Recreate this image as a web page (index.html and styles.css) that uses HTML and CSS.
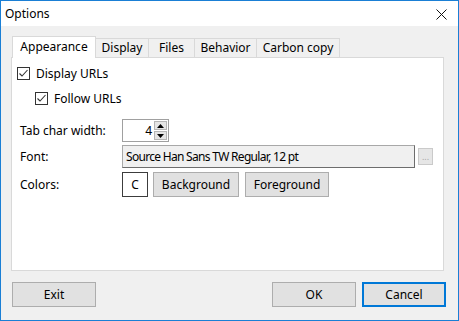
FILE: index.html
```html
<!DOCTYPE html>
<html>
<head>
<meta charset="utf-8">
<link rel="stylesheet" href="styles.css">
</head>
<body>
<div class="window">
  <div class="titlebar">
    <span class="title">Options</span>
    <svg class="close" width="11" height="11" viewBox="0 0 11 11"><path d="M0.5 0.5 L10.5 10.5 M10.5 0.5 L0.5 10.5" stroke="#111" stroke-width="1" fill="none"/></svg>
  </div>
  <div class="client">
    <div class="tabs">
      <div class="tab selected">Appearance</div>
      <div class="tab t-display">Display</div>
      <div class="tab t-files">Files</div>
      <div class="tab t-behavior">Behavior</div>
      <div class="tab t-carbon">Carbon copy</div>
    </div>
    <div class="panel">
      <label class="check row1">
        <span class="box"><svg width="11" height="11" viewBox="0 0 11 11"><path d="M1.5 5.5 L4 8 L9.5 2" stroke="#333" stroke-width="1.1" fill="none"/></svg></span>
        <span>Display URLs</span>
      </label>
      <label class="check row2">
        <span class="box"><svg width="11" height="11" viewBox="0 0 11 11"><path d="M1.5 5.5 L4 8 L9.5 2" stroke="#333" stroke-width="1.1" fill="none"/></svg></span>
        <span>Follow URLs</span>
      </label>
      <div class="form">
        <div class="label l-tab">Tab char width:</div>
        <div class="field f-tab">
          <div class="spinner">
            <span class="spin-value">4</span>
            <div class="spin-buttons">
              <span class="spin-btn"><svg width="7" height="4" viewBox="0 0 7 4"><path d="M0 4 L3.5 0 L7 4 Z" fill="#000"/></svg></span>
              <span class="spin-btn"><svg width="7" height="4" viewBox="0 0 7 4"><path d="M0 0 L3.5 4 L7 0 Z" fill="#000"/></svg></span>
            </div>
          </div>
        </div>
        <div class="label l-font">Font:</div>
        <div class="field f-font">
          <div class="fontbox">Source Han Sans TW Regular, 12 pt</div>
          <div class="ellipsis">...</div>
        </div>
        <div class="label l-colors">Colors:</div>
        <div class="field f-colors">
          <div class="cbox">C</div>
          <div class="btn bg-btn">Background</div>
          <div class="btn fg-btn">Foreground</div>
        </div>
      </div>
    </div>
    <div class="footer">
      <div class="btn dlg exit">Exit</div>
      <div class="spacer"></div>
      <div class="btn dlg ok">OK</div>
      <div class="btn dlg cancel">Cancel</div>
    </div>
  </div>
</div>
</body>
</html>
```
FILE: styles.css
```css
* { box-sizing: border-box; }
html, body { margin: 0; padding: 0; }
body {
  font-family: "Noto Sans", "Liberation Sans", sans-serif;
  font-size: 12px;
  color: #000;
  background: #f0f0f0;
}
.window {
  width: 459px;
  height: 321px;
  border: 1px solid #1a7fd5;
  display: flex;
  flex-direction: column;
  background: #f0f0f0;
}
.titlebar {
  height: 25px;
  background: #fff;
  display: flex;
  align-items: center;
  justify-content: space-between;
  padding: 0 11px 0 4px;
}
.title { line-height: 14px; margin-top: 1px; }
.close { display: block; margin-top: 2px; }
.client {
  flex: 1;
  display: flex;
  flex-direction: column;
  padding: 10px 0 0 10px;
}
.tabs {
  display: flex;
  align-items: flex-end;
  height: 21px;
  padding-left: 1px;
  position: relative;
  z-index: 1;
}
.tab {
  height: 19px;
  border: 1px solid #d9d9d9;
  border-bottom: none;
  background: #f0f0f0;
  text-align: center;
  line-height: 17px;
  margin-left: -1px;
}
.tab.selected {
  height: 22px;
  margin-left: 0;
  margin-bottom: -1px;
  background: #fff;
  width: 84px;
  line-height: 20px;
  position: relative;
  z-index: 2;
}
.t-display { width: 54px; }
.t-files { width: 47px; }
.t-behavior { width: 63px; }
.t-carbon { width: 84px; }
.panel {
  width: 433px;
  height: 214px;
  background: #fff;
  border: 1px solid #d9d9d9;
  display: flex;
  flex-direction: column;
  align-items: flex-start;
}
.check {
  display: flex;
  align-items: center;
  height: 14px;
  gap: 6px;
}
.row1 { margin: 8px 0 0 5px; }
.row2 { margin: 11px 0 0 23px; }
.box {
  width: 13px;
  height: 13px;
  border: 1px solid #333;
  display: flex;
  align-items: center;
  justify-content: center;
  background: #fff;
}
.box svg { display: block; }
.form {
  margin: 14px 0 0 8px;
  display: grid;
  grid-template-columns: 102px 311px;
  grid-template-rows: 23px 23px 25px;
  row-gap: 3px;
}
.l-colors, .f-colors { margin-top: 2px; }
.label { display: flex; align-items: center; }
.field { display: flex; align-items: center; }
.spinner {
  width: 47px;
  height: 23px;
  border: 1px solid #a0a0a0;
  display: flex;
  align-items: center;
  justify-content: flex-end;
  padding-right: 1px;
  gap: 2px;
}
.spin-value { line-height: 14px; }
.spin-buttons {
  display: flex;
  flex-direction: column;
  gap: 1px;
}
.spin-btn {
  width: 13px;
  height: 9px;
  background: #e5e5e5;
  border: 1px solid #b5b5b5;
  display: flex;
  align-items: center;
  justify-content: center;
}
.spin-btn svg { display: block; }
.fontbox {
  width: 295px;
  height: 23px;
  background: #f0f0f0;
  border: 1px solid #a8a8a8;
  border-right-color: #6d6d6d;
  border-bottom-color: #6d6d6d;
  padding-left: 3px;
  display: flex;
  align-items: center;
  letter-spacing: -0.7px;
  white-space: nowrap;
}
.ellipsis {
  width: 15px;
  height: 17px;
  margin-left: 3px;
  background: #e6e6e6;
  border: 1px solid #cacaca;
  color: #a8a8a8;
  font-size: 9px;
  display: flex;
  align-items: center;
  justify-content: center;
  line-height: 8px;
}
.cbox {
  width: 26px;
  height: 25px;
  border: 1px solid #3c3c3c;
  background: #fff;
  display: flex;
  align-items: center;
  justify-content: center;
}
.btn {
  height: 25px;
  background: #e1e1e1;
  border: 1px solid #adadad;
  display: flex;
  align-items: center;
  justify-content: center;
}
.bg-btn { width: 86px; margin-left: 5px; }
.fg-btn { width: 84px; margin-left: 6px; }
.footer {
  display: flex;
  align-items: flex-start;
  margin-top: 11px;
  padding-right: 12px;
}
.dlg { width: 84px; }
.exit { margin-left: 1px; }
.spacer { flex: 1; }
.cancel { margin-left: 6px; border: 2px solid #0078d7; }
```
